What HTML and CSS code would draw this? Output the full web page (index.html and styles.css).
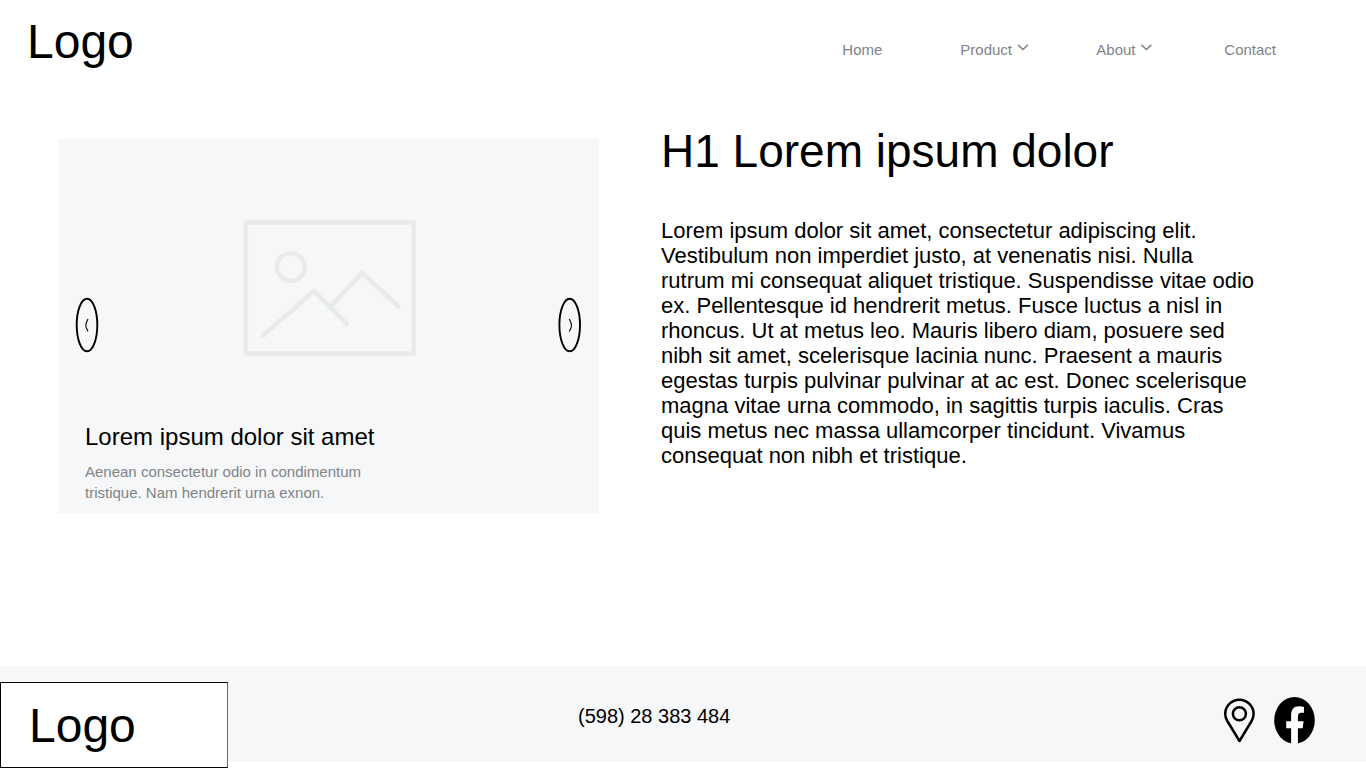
FILE: index.html
```html
<!DOCTYPE html>
<html lang="en">
<head>
<meta charset="utf-8">
<title>Logo</title>
<link rel="stylesheet" href="styles.css">
</head>
<body>
<header class="header">
  <div class="logo">Logo</div>
  <nav class="nav">
    <a class="nav-home">Home</a>
    <a class="nav-product">Product<svg class="chevron" viewBox="0 0 12 8"><path d="M1 1.900 5.900 6.500 10.800 1.900"/></svg></a>
    <a class="nav-about">About<svg class="chevron" viewBox="0 0 12 8"><path d="M0.500 1.900 5.400 6.500 10.300 1.900"/></svg></a>
    <a>Contact</a>
  </nav>
</header>
<main class="main">
  <section class="carousel">
    <div class="stage">
      <svg class="arrow" viewBox="0 0 24 56"><ellipse cx="12" cy="28" rx="10.300" ry="26.300"/><path class="tick" d="M13 22 11.200 26Q10.400 28 11.200 30.500L13 34.500"/></svg>
      <svg class="picture" viewBox="0 0 174 136"><rect x="3.900" y="2.500" width="168" height="131"/><circle cx="48.700" cy="47" r="13.800"/><path d="M20.700 116 72 71l33 33M89.200 86l30.800-33 36 33"/></svg>
      <svg class="arrow" viewBox="0 0 24 56"><ellipse cx="11.700" cy="28" rx="10.300" ry="26.300"/><path class="tick" d="M11.300 22 13.100 26Q13.900 28 13.100 30.500L11.300 34.500"/></svg>
    </div>
    <h2 class="caption-title">Lorem ipsum dolor sit amet</h2>
    <p class="caption">Aenean consectetur odio in condimentum<br>tristique. Nam hendrerit urna exnon.</p>
  </section>
  <article class="article">
    <h1 class="title">H1 Lorem ipsum dolor</h1>
    <p class="copy">Lorem ipsum dolor sit amet, consectetur adipiscing elit.<br>Vestibulum non imperdiet justo, at venenatis nisi. Nulla<br>rutrum mi consequat aliquet tristique. Suspendisse vitae odio<br>ex. Pellentesque id hendrerit metus. Fusce luctus a nisl in<br>rhoncus. Ut at metus leo. Mauris libero diam, posuere sed<br>nibh sit amet, scelerisque lacinia nunc. Praesent a mauris<br>egestas turpis pulvinar pulvinar at ac est. Donec scelerisque<br>magna vitae urna commodo, in sagittis turpis iaculis. Cras<br>quis metus nec massa ullamcorper tincidunt. Vivamus<br>consequat non nibh et tristique.</p>
  </article>
</main>
<footer class="footer">
  <div class="logo footer-logo">Logo</div>
  <div class="phone">(598) 28 383 484</div>
  <div class="social">
    <svg class="pin" viewBox="0 0 32 46"><path d="M16.500 44 4.300 24Q2.200 20.500 2.200 17a14.200 14.200 0 0 1 28.400 0Q30.600 20.500 28.600 24Z"/><circle cx="16.400" cy="16.700" r="6.500"/></svg>
    <svg class="facebook" viewBox="0 0 41 47"><ellipse cx="20.500" cy="23.400" rx="20.300" ry="23.400"/><path class="facebook-f" d="M17.100 47V31.300H12.200V24.200H17.100V18.500C17.100 12.500 20 9.300 25 9.300Q27.800 9.300 30 9.900V15.700H27.300Q23.900 15.700 23.900 19.400V24.200H29.600L28.700 31.300H23.900V47Z"/></svg>
  </div>
</footer>
</body>
</html>
```
FILE: styles.css
```css
* { box-sizing: border-box; }
body { margin: 0; width: 1366px; height: 768px; overflow: hidden; background: #fff; color: #000; font-family: "Liberation Sans", Arial, sans-serif; display: flex; flex-direction: column; }
h1, h2, p { margin: 0; font-weight: 400; }
.header { height: 139px; display: flex; justify-content: space-between; align-items: flex-start; padding: 14px 90px 0 27px; }
.logo { font-size: 48px; line-height: 55px; }
.nav { display: flex; padding-top: 27px; font-size: 15px; line-height: 17px; color: #7e8488; }
.nav a { display: flex; }
.nav-home { width: 118px; }
.nav-product { width: 136px; }
.nav-about { width: 128px; }
.chevron { width: 12px; height: 8px; margin: 2px 0 0 5px; fill: none; stroke: #7e8488; stroke-width: 1.5; }
.main { height: 527px; display: flex; padding-left: 58px; gap: 62px; }
.carousel { width: 541px; height: 374px; background: #f5f7f9; }
.stage { height: 282px; padding: 81px 17px 0; display: flex; justify-content: space-between; }
.arrow { width: 24px; height: 56px; margin-top: 77px; fill: none; stroke: #000; stroke-width: 1.9; }
.tick { stroke-width: 1.1; }
.picture { width: 174px; height: 136px; fill: none; stroke: #e8eaeb; stroke-width: 4.6; stroke-linecap: round; stroke-linejoin: round; }
.caption-title { padding-left: 27px; font-size: 24px; line-height: 32px; }
.caption { padding: 8px 0 0 27px; font-size: 15px; line-height: 21px; color: #808487; }
.article { width: 640px; margin-top: -16px; }
.title { font-size: 46px; line-height: 56px; }
.copy { margin-top: 39px; font-size: 22px; line-height: 25px; white-space: nowrap; }
.footer { height: 96px; background: #f5f7f9; display: flex; align-items: flex-start; }
.footer-logo { width: 228px; height: 86px; margin-top: 16px; padding: 15px 0 0 28px; background: #fff; border: 1px solid #000; border-right-color: #666; }
.phone { margin: 38px 0 0 350px; font-size: 20px; line-height: 24px; }
.social { margin: 31px 51px 0 auto; display: flex; gap: 19px; }
.pin { width: 32px; height: 46px; fill: none; stroke: #000; stroke-width: 2.5; stroke-linejoin: round; }
.facebook { width: 41px; height: 47px; }
.facebook-f { fill: #fff; }
```
